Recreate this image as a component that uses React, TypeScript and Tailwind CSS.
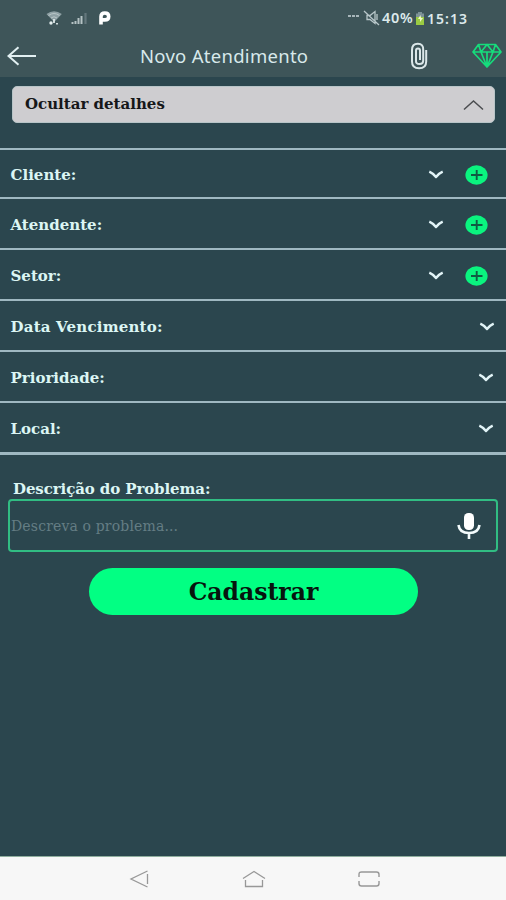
import React from "react";

const serif = "font-['DejaVu_Serif',serif]";

function Chevron() {
  return (
    <svg width="16" height="10" viewBox="0 0 16 10" fill="none" className="shrink-0">
      <path d="M1.300 1.600Q5 3.200 8 7Q11 3.200 14.700 1.600" stroke="#e2f4f7" strokeWidth="2.500" strokeLinejoin="round" />
    </svg>
  );
}

function Plus() {
  return (
    <svg width="23" height="20" viewBox="0 0 23 20" className="shrink-0">
      <ellipse cx="11.5" cy="10" rx="11.1" ry="9.7" fill="#0af47f" />
      <path d="M6 10h11.5M11.7 5v10" stroke="#105a43" strokeWidth="1.9" fill="none" />
    </svg>
  );
}

type RowProps = { label: string; add?: boolean; className: string };

function Row({ label, add, className }: RowProps) {
  return (
    <div className={`flex w-full items-center border-[#9fb8c1] pt-[2px] pl-[10.5px] ${className}`}>
      <span className={`${serif} flex-1 pt-px whitespace-nowrap text-[15px] leading-5 font-bold text-[#dcf6f4]`}>{label}</span>
      <Chevron />
      {add && <span className="ml-[21px] flex"><Plus /></span>}
    </div>
  );
}

function StatusBar() {
  return (
    <div className="flex h-9 items-center pl-[46px] font-['Noto_Sans',sans-serif]">
      <svg width="17" height="16" viewBox="0 0 17 16" className="shrink-0">
        <path d="M.5 4Q8-1.5 15.8 4L8.2 12Z" fill="#8fa1a5" />
        <path d="M2.5 5.5Q8 1.5 13.5 5.5M5 8Q8 5.5 11 8" stroke="#b9c6c8" fill="none" />
        <circle cx="5" cy="13" r="1.7" fill="#e3eeee" />
        <path d="M8 9v4M11 13v1.5" stroke="#dce7e7" strokeWidth="1.8" />
      </svg>
      <svg width="17" height="13" viewBox="0 0 17 13" className="ml-2 shrink-0">
        <path d="M1.5 10v2M4.5 9v3M7.5 6v6M10.5 4v8" stroke="#b5c3c5" strokeWidth="2" />
        <path d="M14.5 1v11" stroke="#64777c" strokeWidth="2.2" />
      </svg>
      <svg width="14" height="14" viewBox="0 0 14 14" className="ml-[10px] shrink-0">
        <path d="M3 13.500V5.4Q3 2 6.8 2Q10.7 2 10.7 5.4Q10.7 8.900 6.8 8.900H4" stroke="#fff" strokeWidth="3.6" fill="none" />
      </svg>
      <svg width="11" height="4" viewBox="0 0 11 4" className="mb-1 ml-[236px] shrink-0">
        <path d="M0 2h11" stroke="#a7b6ba" strokeWidth="2" strokeDasharray="3 1" />
      </svg>
      <svg width="18" height="16" viewBox="0 0 18 16" className="ml-[4px] shrink-0">
        <path d="M4 5.5h3l5-4v12l-5-4H4zM1 1l15 14M14 4v6" stroke="#b8c7ca" strokeWidth="1.3" fill="none" />
      </svg>
      <span className="ml-[1px] w-[33px] shrink-0 whitespace-nowrap text-[14.5px] font-semibold tracking-[0.7px] text-[#dce9eb]">40%</span>
      <svg width="10" height="15" viewBox="0 0 10 15" className="shrink-0">
        <path d="M3 1h4v1.5h2V6H1V2.5h2z" fill="#7d9297" />
        <path d="M1 6h8v8H1z" fill="#9acb42" />
        <path d="M5.5 4L3 8h2v3l3-4H6z" fill="#effac5" />
      </svg>
      <span className="ml-[2px] text-[14px] font-semibold tracking-[1px] text-[#dce9eb]">15:13</span>
    </div>
  );
}

function Header() {
  return (
    <div className="flex h-10 items-center pl-[7px]">
      <svg width="30" height="20" viewBox="0 0 30 20" fill="none" className="shrink-0">
        <path d="M29 10H1.5M11.5 1.2L1.5 10L11.5 18.8" stroke="#e2f0f2" strokeWidth="2" />
      </svg>
      <span className="ml-[103px] w-[270px] shrink-0 whitespace-nowrap font-['Noto_Sans',sans-serif] text-[18.5px] tracking-[0.28px] text-[#d8e9eb]">Novo Atendimento</span>
      <svg width="18" height="28" viewBox="0 0 18 28" fill="none" className="shrink-0">
        <path d="M16.2 8v11.5q0 6.8-7.1 6.8T2 19.5V8q0-6.2 5.8-6.2T13.2 8v10.5q0 3.5-3.8 3.5T6 18.5V8.5q0-2 2-2t2 2V18" stroke="#dbe7e9" strokeWidth="2" />
      </svg>
      <svg width="30" height="26" viewBox="0 0 30 26" fill="none" className="ml-11 shrink-0">
        <path d="M6.5 1.5h17L29 9L15 24L1 9zM1 9h28M6.5 1.5L9 9l6 15L21 9l2.5-7.5M9 9l6-7.5L21 9M15 9v15" stroke="#16dc7c" strokeWidth="1.7" strokeLinejoin="round" />
      </svg>
    </div>
  );
}

export default function App() {
  return (
    <div className="flex h-[900px] w-[506px] flex-col overflow-hidden bg-[#2b464e]">
      <header className="h-[77px] shrink-0 bg-[#3e5559]">
        <StatusBar />
        <Header />
      </header>
      <div className="mr-[11px] ml-[12px] mt-[9px] flex h-[37px] shrink-0 items-center justify-between rounded-[5px] border border-[#b7c4c7] bg-[#cecdd0] pr-[10px] pl-3">
        <span className={`${serif} text-[15px] font-bold text-[#161719]`}>Ocultar detalhes</span>
        <svg width="21" height="12" viewBox="0 0 21 12" fill="none">
          <path d="M1 10.5L10.5 2L20 10.5" stroke="#4b4d50" strokeWidth="1.5" />
        </svg>
      </div>
      <main className="mt-[25px] shrink-0 border-t-2 border-[#9fb8c1]">
        <Row label="Cliente:" add className="h-[49px] border-b-2 pr-[18px]" />
        <Row label="Atendente:" add className="h-[51px] border-b-2 pr-[18px]" />
        <Row label="Setor:" add className="h-[51px] border-b-2 pr-[18px]" />
        <Row label="Data Vencimento:" className="h-[51px] border-b-2 pr-[11px] tracking-[0.2px]" />
        <Row label="Prioridade:" className="h-[51px] border-b-2 pr-[12px]" />
        <Row label="Local:" className="h-[52px] border-b-3 pr-[12px]" />
      </main>
      <label className={`${serif} mt-[24px] ml-[13px] h-5 shrink-0 text-[15px] leading-5 font-bold tracking-[-0.1px] text-[#dcf6f4]`}>Descrição do Problema:</label>
      <div className="mx-[8px] flex h-[53px] w-[490px] shrink-0 items-center justify-between rounded-[4px] border-[2.5px] border-[#31bd83] pr-[15px] pl-[1px]">
        <span className={`${serif} pt-px text-[14px] tracking-[0.15px] text-[#647d84]`}>Descreva o problema...</span>
        <svg width="24" height="28" viewBox="0 0 24 28" fill="none">
          <rect x="7" y="1" width="10" height="17" rx="4.5" fill="#fff" />
          <path d="M1.5 13Q2.5 21 12 21Q21.5 21 22.5 13M12 21v6" stroke="#f3fbfc" strokeWidth="2.6" />
        </svg>
      </div>
      <button className={`${serif} mt-4 ml-[89px] h-[47px] w-[329px] shrink-0 rounded-full bg-[#02ff83] pt-[2px] text-[23.5px] font-bold text-[#07150e]`}>Cadastrar</button>
      <footer className="mt-auto flex h-[44px] shrink-0 items-center border-t border-[#8fae9e] bg-[#f7f7f7] pl-[129px]">
        <svg width="20" height="18" viewBox="0 0 20 18" fill="none" className="shrink-0">
          <path d="M18.5 1L2 9l16.5 8M18.5 4v10" stroke="#989898" strokeWidth="1.3" />
        </svg>
        <svg width="24" height="18" viewBox="0 0 24 18" fill="none" className="ml-[93px] shrink-0">
          <path d="M1 8.5L12 1.5L23 8.5M3.5 10v6.5h17V10" stroke="#989898" strokeWidth="1.3" />
        </svg>
        <svg width="24" height="18" viewBox="0 0 24 18" fill="none" className="ml-[91px] shrink-0">
          <path d="M2 7V4.500Q2 2 4.500 2H19.500Q22 2 22 4.500V7M2 11v2.500Q2 16 4.500 16H19.500Q22 16 22 13.500V11" stroke="#989898" strokeWidth="1.4" />
        </svg>
      </footer>
    </div>
  );
}
